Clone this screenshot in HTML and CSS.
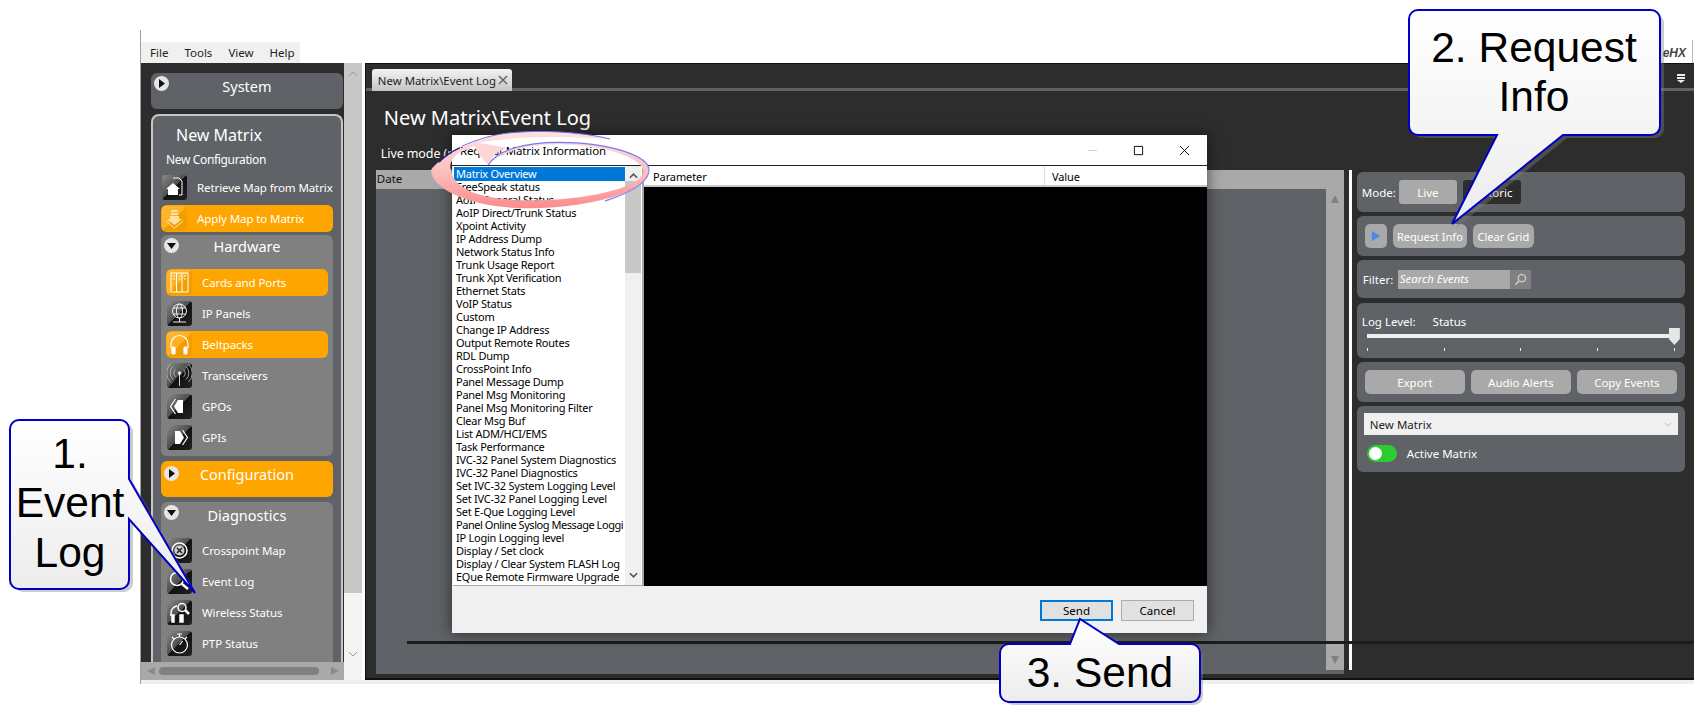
FILE: index.html
```html
<!DOCTYPE html>
<html lang="en">
<head>
<meta charset="utf-8">
<title>Event Log</title>
<link rel="stylesheet" href="styles.css">
</head>
<body>
<div class="app">
  <header class="topbar">
    <nav class="menu"><span>File</span><span>Tools</span><span>View</span><span>Help</span></nav>
    <div class="logo">eHX</div>
  </header>
  <div class="workspace">
    <div class="sidecol">
      <aside class="sidebar">
        <section class="sys">
          <span class="round"><svg viewBox="0 0 15 15"><path d="M5 3l6 4.500-6 4.500z"/></svg></span>
          <span class="sys-title">System</span>
        </section>
        <section class="matrix">
          <div class="mx-title">New Matrix</div>
          <div class="mx-sub">New Configuration</div>
          <div class="row plain first"><span class="tile"><svg viewBox="0 0 25 25"><path d="M11 3h6l3 3v14h-3" fill="none" stroke="#fff"/><path d="M4 14l7-6 7 6h-2v6H6v-6z" fill="#fff"/></svg></span><span>Retrieve Map from Matrix</span></div>
          <div class="row hot first"><span class="tile"><svg viewBox="0 0 25 25"><path d="M9 4h7v2H9zM9 7h7v2H9zM8 10h9v3h3l-7.500 6L5 13h3z" fill="#ffe0a6"/><path d="M4 15l8.500 7 8.500-7" fill="none" stroke="#ffe0a6"/></svg></span><span>Apply Map to Matrix</span></div>
          <section class="group hardware">
            <div class="ghead"><span class="round"><svg viewBox="0 0 15 15"><path d="M3 5h9l-4.500 6z"/></svg></span><span>Hardware</span></div>
            <div class="rows">
              <div class="row hot"><span class="tile"><svg viewBox="0 0 25 25"><path d="M4 3h17v19H4z" fill="none" stroke="#fff"/><path d="M9.500 3v19M15 3v19" stroke="#fff"/><path d="M6 6h2M11.500 6h2M17 6h2M6 9h2M11.500 9h2M17 9h2" stroke="#fff"/></svg></span><span>Cards and Ports</span></div>
              <div class="row plain"><span class="tile"><svg viewBox="0 0 25 25" fill="none" stroke="#fff" stroke-width=".9"><circle cx="12.500" cy="10" r="7"/><ellipse cx="12.500" cy="10" rx="3" ry="7"/><path d="M6 7h13M6 13h13M12.500 17v4M6 21h13"/></svg></span><span>IP Panels</span></div>
              <div class="row hot"><span class="tile"><svg viewBox="0 0 25 25" fill="none" stroke="#fff" stroke-width="1.200"><path d="M4 16v-4a8.500 8.500 0 0 1 17 0v4"/><rect x="5" y="15" width="3" height="7" rx="1" fill="#fff"/><rect x="17" y="15" width="3" height="7" rx="1" fill="#fff"/></svg></span><span>Beltpacks</span></div>
              <div class="row plain"><span class="tile"><svg viewBox="0 0 25 25" fill="none" stroke="#bbb" stroke-width=".8"><circle cx="12.500" cy="10" r="1.500" fill="#fff"/><path d="M12.500 11v12" stroke="#fff"/><path d="M8.500 14a5.500 5.500 0 0 1 0-8M16.500 6a5.500 5.500 0 0 1 0 8M6 16.500a9 9 0 0 1 0-13M19 3.500a9 9 0 0 1 0 13M3.500 19a12.500 12.500 0 0 1 0-18M21.500 1a12.500 12.500 0 0 1 0 18"/></svg></span><span>Transceivers</span></div>
              <div class="row plain"><span class="tile"><svg viewBox="0 0 25 25"><path d="M11 6h5v13h-5l-4-6.500z" fill="#fff"/><path d="M8.500 5l-5 7.500 5 7.500" fill="none" stroke="#fff" stroke-width="1.200"/></svg></span><span>GPOs</span></div>
              <div class="row plain"><span class="tile"><svg viewBox="0 0 25 25"><path d="M8 6h5l4 6.500-4 6.500H8z" fill="#fff"/><path d="M15.500 5l5 7.500-5 7.500" fill="none" stroke="#fff" stroke-width="1.200"/></svg></span><span>GPIs</span></div>
            </div>
          </section>
          <section class="config">
            <span class="round"><svg viewBox="0 0 15 15"><path d="M5 3l6 4.500-6 4.500z"/></svg></span>
            <span>Configuration</span>
          </section>
          <section class="group diagnostics">
            <div class="ghead"><span class="round"><svg viewBox="0 0 15 15"><path d="M3 5h9l-4.500 6z"/></svg></span><span>Diagnostics</span></div>
            <div class="rows">
              <div class="row plain"><span class="tile"><svg viewBox="0 0 25 25" fill="none" stroke="#fff"><circle cx="12.500" cy="12.500" r="7.500" stroke-width="1.500"/><circle cx="12.500" cy="12.500" r="5" fill="#ccc" stroke="none"/><path d="M10 10l5 5M15 10l-5 5" stroke="#222" stroke-width="1.500"/></svg></span><span>Crosspoint Map</span></div>
              <div class="row plain"><span class="tile"><svg viewBox="0 0 25 25" fill="none" stroke="#fff" stroke-width="1.500"><circle cx="10" cy="10" r="6.500"/><path d="M15 15l6 5" stroke-width="2.500"/></svg></span><span>Event Log</span></div>
              <div class="row plain"><span class="tile"><svg viewBox="0 0 25 25" fill="none" stroke="#fff" stroke-width="1.500"><path d="M4 16v-3a7 7 0 0 1 6-7"/><rect x="5" y="15" width="2" height="7" fill="#fff"/><rect x="13" y="15" width="3" height="7" fill="#fff"/><circle cx="15" cy="7.500" r="4"/><path d="M18 10l4 4" stroke-width="2.500"/></svg></span><span>Wireless Status</span></div>
              <div class="row plain"><span class="tile"><svg viewBox="0 0 25 25" fill="none" stroke="#fff" stroke-width="1.200"><circle cx="12.500" cy="14" r="8"/><path d="M10 3h5M12.500 3v3M12.500 14l3-4M5 6l2 2M20 6l-2 2"/></svg></span><span>PTP Status</span></div>
              <div class="row plain"><span class="tile"></span></div>
            </div>
          </section>
        </section>
      </aside>
      <div class="hscroll"><i class="arr-l"></i><i class="hthumb"></i><i class="arr-r"></i></div>
    </div>
    <div class="vscroll"><div class="vtrack"><svg viewBox="0 0 12 7" class="chev"><path d="M1 6l5-5 5 5" fill="none" stroke="#999" stroke-width="1.200"/></svg></div><div class="vrest"><svg viewBox="0 0 12 7" class="chev"><path d="M1 1l5 5 5-5" fill="none" stroke="#999" stroke-width="1.200"/></svg></div></div>
    <main class="main">
      <div class="tabstrip">
        <div class="tab"><span>New Matrix\Event Log</span><svg viewBox="0 0 10 10"><path d="M1 1l8 8M9 1l-8 8" stroke="#666" stroke-width="1.500"/></svg></div>
        <svg class="pin" viewBox="0 0 8 9"><path d="M0 0h8v2H0zM0 3h8v2H0zM0 6h8L4 9z" fill="#eee"/></svg>
      </div>
      <h1 class="title">New Matrix\Event Log</h1>
      <div class="livemode">Live mode (n</div>
      <div class="content">
        <div class="grid">
          <div class="grid-head">Date</div>
          <div class="grid-body">
            <div class="grid-sb"><i class="tri-up"></i><i class="tri-down"></i></div>
          </div>
        </div>
        <div class="split"></div>
        <div class="panels">
          <div class="panel p-mode"><span class="lbl">Mode:</span><span class="btn live">Live</span><span class="btn hist">Historic</span></div>
          <div class="panel p-req"><span class="btn play"><svg viewBox="0 0 12 12"><path d="M1 0l10 6-10 6z" fill="#4a86f5"/></svg></span><span class="btn req">Request Info</span><span class="btn clr">Clear Grid</span></div>
          <div class="panel p-filter"><span class="lbl">Filter:</span><span class="search">Search Events</span><span class="sbtn"><svg viewBox="0 0 14 14" fill="none" stroke="#c4c4c4" stroke-width="1.600"><circle cx="8.500" cy="5.500" r="4"/><path d="M5.500 8.500L1.500 12.500" stroke-width="2"/></svg></span></div>
          <div class="panel p-log">
            <div class="loghead"><span>Log Level:</span><span>Status</span></div>
            <div class="slider"><i class="thumb"></i></div>
            <div class="ticks"><i></i><i></i><i></i><i></i><i></i></div>
          </div>
          <div class="panel p-acts"><span class="btn">Export</span><span class="btn">Audio Alerts</span><span class="btn">Copy Events</span></div>
          <div class="panel p-active">
            <div class="select"><span>New Matrix</span><svg viewBox="0 0 10 6"><path d="M1 1l4 4 4-4" fill="none" stroke="#aaa"/></svg></div>
            <div class="toggle-row"><span class="toggle"><i></i></span><span>Active Matrix</span></div>
          </div>
        </div>
      </div>
    </main>
  </div>
  <div class="pagefoot"></div>
</div>

<div class="rule"></div>

<div class="dialog">
  <div class="dlg-title">
    <span>Request Matrix Information</span>
    <div class="winbtns">
      <svg viewBox="0 0 12 12"><path d="M1 6h10" stroke="#ccc"/></svg>
      <svg viewBox="0 0 12 12"><path d="M1.500 1.500h9v9h-9z" fill="none" stroke="#000"/></svg>
      <svg viewBox="0 0 12 12"><path d="M1 1l10 10M11 1L1 11" stroke="#000"/></svg>
    </div>
  </div>
  <div class="dlg-body">
    <div class="listbox">
      <ul class="items">
        <li class="sel">Matrix Overview</li>
        <li>FreeSpeak status</li>
        <li>AoIP General Status</li>
        <li>AoIP Direct/Trunk Status</li>
        <li>Xpoint Activity</li>
        <li>IP Address Dump</li>
        <li>Network Status Info</li>
        <li>Trunk Usage Report</li>
        <li>Trunk Xpt Verification</li>
        <li>Ethernet Stats</li>
        <li>VoIP Status</li>
        <li>Custom</li>
        <li>Change IP Address</li>
        <li>Output Remote Routes</li>
        <li>RDL Dump</li>
        <li>CrossPoint Info</li>
        <li>Panel Message Dump</li>
        <li>Panel Msg Monitoring</li>
        <li>Panel Msg Monitoring Filter</li>
        <li>Clear Msg Buf</li>
        <li>List ADM/HCI/EMS</li>
        <li>Task Performance</li>
        <li>IVC-32 Panel System Diagnostics</li>
        <li>IVC-32 Panel Diagnostics</li>
        <li>Set IVC-32 System Logging Level</li>
        <li>Set IVC-32 Panel Logging Level</li>
        <li>Set E-Que Logging Level</li>
        <li class="squeeze">Panel Online Syslog Message Loggi</li>
        <li>IP Login Logging level</li>
        <li>Display / Set clock</li>
        <li>Display / Clear System FLASH Log</li>
        <li>EQue Remote Firmware Upgrade</li>
      </ul>
      <div class="list-sb">
        <svg class="sb-a" viewBox="0 0 10 6"><path d="M1 5l4-4 4 4" fill="none" stroke="#555" stroke-width="1.800"/></svg>
        <div class="sb-thumb"></div>
        <svg class="sb-b" viewBox="0 0 10 6"><path d="M1 1l4 4 4-4" fill="none" stroke="#555" stroke-width="1.800"/></svg>
      </div>
    </div>
    <div class="table">
      <div class="thead"><span class="th-a">Parameter</span><span class="th-b">Value</span></div>
      <div class="tbody"></div>
    </div>
  </div>
  <div class="dlg-foot"><span class="dbtn default">Send</span><span class="dbtn">Cancel</span></div>
</div>

<svg class="annot" viewBox="0 0 1694 716" width="1694" height="716">
  <defs>
    <linearGradient id="fillg" x1="0" y1="0" x2="0" y2="1"><stop offset="0" stop-color="#fff"/><stop offset="1" stop-color="#ececec"/></linearGradient>
    <linearGradient id="pink" x1="0" y1="0" x2="0" y2="1"><stop offset="0" stop-color="#fde2e2"/><stop offset=".55" stop-color="#fbbcbc"/><stop offset="1" stop-color="#fa8c8c"/></linearGradient>
  </defs>
  <g transform="translate(425 125) scale(.33333)">
    <path fill="url(#pink)" fill-rule="evenodd" d="M555 42C470 20 340 14 250 24C170 32 45 92 18 135C20 200 160 252 320 250C480 248 672 205 672 135C672 95 560 52 400 52C300 52 215 75 190 120L148 55C230 40 350 28 555 42ZM100 85C80 100 72 120 78 135C85 185 150 226 320 226C470 226 652 190 655 140C657 105 555 60 400 58C300 58 225 82 190 120L148 62Z"/>
    <path fill="#fcd6d6" d="M190 120C200 95 215 80 245 68L150 52C148 75 165 95 190 120Z"/>
    <path fill="none" stroke="#6c6cf0" stroke-width="3" d="M555 42C470 20 340 14 250 24C205 29 160 42 110 64"/>
    <path fill="none" stroke="#1a1a90" stroke-width="4" d="M42 112C60 92 80 80 105 68"/>
    <path fill="none" stroke="#7a7af0" stroke-width="3.500" d="M190 120C215 75 300 52 400 52C560 52 672 95 672 135"/>
    <path fill="none" stroke="#8a8af2" stroke-width="4" d="M672 135C672 175 610 205 540 228"/>
  </g>
  <g class="callout">
    <path class="shadow" d="M23 423H124a9 9 0 0 1 9 9V482L198 596L133 522V583a9 9 0 0 1-9 9H23a9 9 0 0 1-9-9V432a9 9 0 0 1 9-9Z"/>
    <path class="shape" d="M19 420H120a9 9 0 0 1 9 9V479L195 593L129 519V580a9 9 0 0 1-9 9H19a9 9 0 0 1-9-9V429a9 9 0 0 1 9-9Z"/>
    <text x="70" y="468">1.</text>
    <text x="70" y="517">Event</text>
    <text x="70" y="567">Log</text>
  </g>
  <g class="callout">
    <path class="shadow" d="M1422 14H1655a9 9 0 0 1 9 9V129a9 9 0 0 1-9 9H1567L1456 228L1501 138H1422a9 9 0 0 1-9-9V23a9 9 0 0 1 9-9Z"/>
    <path class="shape" d="M1418 10H1651a9 9 0 0 1 9 9V126a9 9 0 0 1-9 9H1563L1452 224L1497 135H1418a9 9 0 0 1-9-9V19a9 9 0 0 1 9-9Z"/>
    <text x="1534" y="62">2. Request</text>
    <text x="1534" y="111">Info</text>
  </g>
  <g class="callout">
    <path class="shadow" d="M1013 648H1194a9 9 0 0 1 9 9V696a9 9 0 0 1-9 9H1013a9 9 0 0 1-9-9V657a9 9 0 0 1 9-9Z"/>
    <path class="shape" d="M1009 644H1070L1080 619L1119 644H1191a9 9 0 0 1 9 9V693a9 9 0 0 1-9 9H1009a9 9 0 0 1-9-9V653a9 9 0 0 1 9-9Z"/>
    <text x="1100" y="687">3. Send</text>
  </g>
</svg>
</body>
</html>
```
FILE: styles.css
```css
* { box-sizing: border-box; }
html, body { margin: 0; padding: 0; background: #fff; }
body {
  width: 1694px; height: 716px; overflow: hidden; position: relative;
  font-family: "Noto Sans", "Open Sans", sans-serif; font-size: 12px; color: #fff;
}
i { display: block; }

.app { margin: 30px 0 0 140px; border-left: 1px solid #a0a0a0; height: 654px; display: flex; flex-direction: column; }
.topbar { height: 33px; display: flex; justify-content: space-between; align-items: flex-end; }
.menu { height: 21px; width: 159px; background: #f0f0f0; color: #222; display: flex; align-items: center; padding-left: 9px; gap: 16px; font-size: 11.5px; }
.logo { color: #444; font: italic bold 12px "Liberation Sans", sans-serif; height: 23px; line-height: 27px; padding-right: 6px; border-right: 1px solid #bbb; margin-right: 1px; }

.workspace { display: flex; height: 617px; }
.sidecol { width: 203px; display: flex; flex-direction: column; }
.sidebar { height: 599px; background: #2d2d2d; padding: 10px 1px 0 10px; overflow: hidden; }
.sys { height: 36px; background: #5f6266; border-radius: 6px; position: relative; text-align: center; font-size: 14.5px; padding-top: 3px; }
.round { width: 15px; height: 15px; border-radius: 50%; background: #e6e6e6; display: block; }
.round svg { display: block; width: 15px; height: 15px; fill: #111; }
.sys .round { position: absolute; left: 3px; top: 3px; }
.sys-title { line-height: 20px; }

.matrix { margin-top: 5px; height: 560px; background: #5f6266; border: 2px solid #c6c6c6; border-bottom: 0; border-radius: 8px 8px 0 0; padding: 0 8px; }
.mx-title { margin: 7px 0 0 15px; font-size: 16px; line-height: 24px; }
.mx-sub { margin: 2px 0 0 5px; font-size: 12px; line-height: 21px; letter-spacing: -.35px; }

.row { height: 27px; display: flex; align-items: center; padding-left: 1px; gap: 10px; border-radius: 6px; font-size: 11.5px; white-space: nowrap; letter-spacing: -.1px; }
.row.hot { background: #ffa500; }
.row.first { margin-bottom: 4px; }
.row.first.plain { margin-top: 4px; }
.tile { width: 25px; height: 25px; flex: none; border-radius: 3px; background: linear-gradient(135deg, #8a8a8a 0, #4c4c4c 50%, #111 50%, #222 100%); }
.hot .tile { background: linear-gradient(135deg, #ffb733 0, #ffb01f 50%, #f29d00 50%, #f29d00 100%); }
.tile svg { display: block; width: 25px; height: 25px; }

.group { background: #808080; border-radius: 6px; padding: 0 5px; }
.hardware { height: 221px; margin-top: -1px; }
.diagnostics { height: 180px; overflow: hidden; margin-top: 5px; }
.ghead { height: 34px; position: relative; text-align: center; font-size: 14.5px; line-height: 23px; }
.diagnostics .ghead { height: 35px; line-height: 26px; }
.ghead .round { position: absolute; left: -2px; top: 3px; }
.rows { display: flex; flex-direction: column; gap: 4px; }
.config { height: 36px; margin-top: 5px; background: #ffa500; border-radius: 6px; position: relative; text-align: center; font-size: 14.5px; line-height: 25px; padding-top: 1px; }
.config .round { position: absolute; left: 3px; top: 5px; }

.hscroll { height: 18px; background: #a9a9a9; display: flex; align-items: center; padding: 0 5px 0 6px; }
.hthumb { width: 160px; height: 8px; background: #808080; border-radius: 4px; margin-left: 4px; }
.arr-l { border: 4px solid transparent; border-right: 8px solid #8a8a8a; border-left: 0; }
.arr-r { border: 4px solid transparent; border-left: 8px solid #8a8a8a; border-right: 0; margin-left: auto; }

.vscroll { width: 18px; display: flex; flex-direction: column; height: 617px; }
.vtrack { height: 530px; background: #c8c8c8; padding-top: 8px; }
.vrest { flex: 1; background: #f4f4f4; padding-top: 58px; }
.chev { display: block; width: 10px; height: 6px; margin-left: 4px; }

.main { margin-left: 3px; width: 1330px; background: #2d2d2d; border: 1px solid #111; border-width: 1px 0 2px 1px; position: relative; display: flex; flex-direction: column; }
.tabstrip { height: 27px; padding: 5px 9px 0 6px; display: flex; justify-content: space-between; border-bottom: 3px solid #5f6266; }
.tab { width: 140px; height: 22px; background: linear-gradient(#f4f4f4, #c4c4c4); border-radius: 3px 3px 0 0; color: #222; font-size: 11.4px; display: flex; align-items: center; justify-content: space-between; padding: 0 4px 0 6px; }
.tab svg { width: 10px; height: 10px; }
.pin { width: 8px; height: 9px; margin-top: 5px; }
.title { margin: 12px 0 0 18px; font-size: 20px; font-weight: 400; line-height: 30px; }
.livemode { margin: 12px 0 0 15px; font-size: 12.500px; line-height: 18px; height: 18px; letter-spacing: -.1px; }
.content { margin: 7px 0 0 10px; display: flex; height: 504px; }
.grid { width: 968px; height: 504px; background: #5f6266; display: flex; flex-direction: column; }
.grid-head { height: 19px; background: #a9a9a9; color: #111; padding-left: 1px; line-height: 18px; font-size: 11.5px; }
.grid-body { flex: 1; display: flex; justify-content: flex-end; }
.grid-sb { width: 18px; height: 481px; background: #a9a9a9; display: flex; flex-direction: column; justify-content: space-between; align-items: center; padding: 6px 0; }
.tri-up { border: 4px solid transparent; border-bottom: 8px solid #808080; border-top: 0; }
.tri-down { border: 4px solid transparent; border-top: 8px solid #808080; border-bottom: 0; }
.split { width: 8px; height: 500px; border-right: 3px solid #fff; margin-right: 5px; }
.panels { width: 328px; padding-top: 2px; display: flex; flex-direction: column; gap: 4px; font-size: 11.5px; }
.panel { background: #5f6266; border-radius: 6px; display: flex; align-items: center; }
.btn { background: #a9a9a9; border-radius: 3px; height: 24px; display: flex; align-items: center; justify-content: center; font-size: 11.5px; }
.p-mode { height: 40px; padding-left: 5px; }
.p-mode .lbl { width: 37px; }
.live { width: 58px; }
.hist { width: 58px; margin-left: 6px; background: #2d2d2d; }
.p-req { height: 40px; padding-left: 8px; gap: 6px; }
.play { width: 22px; border-radius: 5px; }
.play svg { width: 10px; height: 12px; }
.req { width: 74px; border-radius: 6px; font-size: 11px; }
.clr { width: 61px; border-radius: 6px; font-size: 11px; }
.p-filter { height: 38px; padding-left: 6px; }
.p-filter .lbl { width: 35px; }
.search { width: 112px; height: 19px; background: #a9a9a9; font-style: italic; padding-left: 2px; line-height: 18px; font-size: 11.4px; }
.sbtn { width: 21px; height: 19px; background: #808080; display: flex; align-items: center; justify-content: center; }
.sbtn svg { width: 13px; height: 13px; }
.p-log { height: 55px; display: block; margin-top: 1px; padding: 10px 5px 0 5px; position: relative; }
.loghead { display: flex; gap: 17px; line-height: 18px; }
.slider { height: 4px; margin: 3px 6px 0 5px; background: #eee; position: relative; }
.thumb { position: absolute; right: -6px; top: -6px; width: 11px; height: 17px; background: #e6e6e6; clip-path: polygon(0 0, 100% 0, 100% 65%, 50% 100%, 0 65%); }
.ticks { display: flex; justify-content: space-between; margin: 10px 5px 0 5px; }
.ticks i { width: 1px; height: 3px; background: #eee; }
.p-acts { height: 40px; padding-left: 8px; gap: 6px; }
.p-acts .btn { width: 100px; border-radius: 5px; }
.p-active { height: 66px; display: block; padding: 7px 7px 0 7px; }
.select { height: 22px; background: #f0f0f0; color: #222; display: flex; align-items: center; justify-content: space-between; padding: 0 6px; font-size: 11.5px; }
.select svg { width: 8px; height: 5px; }
.toggle-row { display: flex; align-items: center; gap: 10px; margin: 10px 0 0 3px; font-size: 11.5px; }
.toggle { width: 30px; height: 17px; border-radius: 9px; background: #2ecc33; padding: 2px 0 0 2px; }
.toggle i { width: 13px; height: 13px; border-radius: 50%; background: #fff; }
.pagefoot { height: 4px; background: #f0eef0; }

.rule { position: absolute; left: 407px; top: 641px; width: 1287px; height: 3px; background: #1c1c1c; }

.dialog { position: absolute; left: 452px; top: 135px; width: 755px; height: 498px; background: #f0f0f0; color: #000; box-shadow: 0 0 14px rgba(0,0,0,.55); display: flex; flex-direction: column; }
.dlg-title { height: 31px; background: #fff; border-bottom: 1px solid #222; display: flex; justify-content: space-between; align-items: center; padding-left: 8px; font-size: 11.5px; letter-spacing: -.15px; }
.winbtns { display: flex; }
.winbtns svg { width: 11px; height: 11px; margin-right: 35px; }
.winbtns svg:last-child { margin-right: 17px; }
.dlg-body { height: 420px; display: flex; }
.listbox { width: 191px; margin-left: 1px; background: #fff; border-right: 2px solid #a8a8a8; border-bottom: 1px solid #a8a8a8; display: flex; }
.items { list-style: none; margin: 1px 0 0; padding: 0; width: 172px; overflow: hidden; }
.items li { height: 13px; line-height: 13px; padding-left: 3px; font-size: 11px; white-space: nowrap; letter-spacing: -.25px; }
.items li.sel { background: #0078d7; color: #fff; margin-left: 1px; padding-left: 2px; height: 14px; margin-bottom: -1px; }
.items li.squeeze { letter-spacing: -.45px; }
.list-sb { width: 16px; background: #f0f0f0; position: relative; display: flex; flex-direction: column; align-items: center; padding-top: 7px; }
.sb-a, .sb-b { width: 9px; height: 6px; flex: none; }
.sb-thumb { width: 16px; height: 92px; background: #c8c8c8; margin-top: 2px; }
.sb-b { margin-top: auto; margin-bottom: 7px; }
.table { flex: 1; display: flex; flex-direction: column; }
.thead { height: 21px; background: #fff; border-bottom: 2px solid #c8c8c8; display: flex; align-items: center; font-size: 11px; letter-spacing: -.1px; }
.th-a { width: 401px; padding-left: 9px; height: 100%; line-height: 21px; border-right: 1px solid #ddd; }
.th-b { padding-left: 7px; line-height: 21px; height: 100%; }
.tbody { flex: 1; background: #000; }
.dlg-foot { flex: 1; display: flex; justify-content: flex-end; gap: 8px; padding: 14px 13px 0 0; }
.dbtn { width: 73px; height: 21px; background: #e1e1e1; border: 1px solid #adadad; display: flex; align-items: center; justify-content: center; font-size: 11.5px; }
.dbtn.default { border: 2px solid #0078d7; }

.annot { position: absolute; left: 0; top: 0; pointer-events: none; }
.callout .shape { fill: url(#fillg); stroke: #0000c4; stroke-width: 2; }
.callout .shadow { fill: #808080; opacity: .4; }
.callout text { font-family: "Liberation Sans", Arial, sans-serif; font-size: 42.500px; fill: #000; text-anchor: middle; }
```
